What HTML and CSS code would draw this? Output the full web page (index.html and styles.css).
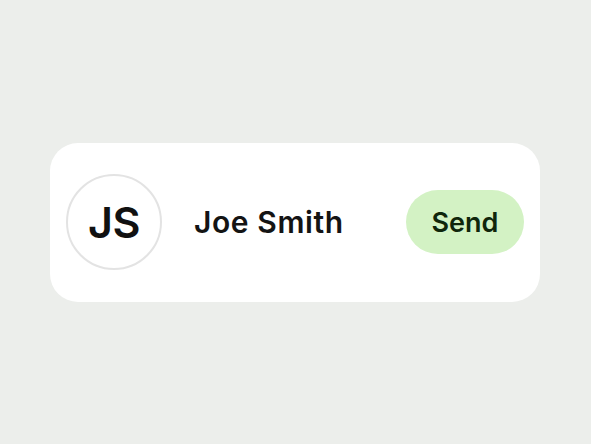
FILE: index.html
```html
<!DOCTYPE html>
<html>
<head>
<meta charset="utf-8">
<link rel="stylesheet" href="styles.css">
</head>
<body>
<div class="card">
  <div class="avatar">JS</div>
  <div class="name">Joe Smith</div>
  <button class="send">Send</button>
</div>
</body>
</html>
```
FILE: styles.css
```css
html, body {
  margin: 0;
  height: 100%;
}
body {
  background: #eceeeb;
  display: flex;
  align-items: center;
  padding-left: 50px;
  box-sizing: border-box;
  font-family: Inter, "Liberation Sans", sans-serif;
}
.card {
  box-sizing: border-box;
  width: 490px;
  height: 159px;
  background: #ffffff;
  border-radius: 28px;
  display: flex;
  align-items: center;
  padding: 0 16px;
}
.avatar {
  box-sizing: border-box;
  width: 96px;
  height: 96px;
  border-radius: 50%;
  border: 2px solid #e3e3e3;
  display: flex;
  align-items: center;
  justify-content: center;
  font-size: 43px;
  font-weight: 600;
  color: #111111;
  letter-spacing: -0.5px;
}
.name {
  margin-left: 32px;
  font-size: 30px;
  font-weight: 600;
  color: #141414;
  letter-spacing: 0.6px;
}
.send {
  margin-left: auto;
  width: 118px;
  height: 64px;
  border: none;
  border-radius: 32px;
  background: #d3f2c4;
  color: #0f260b;
  font-family: inherit;
  font-size: 27px;
  font-weight: 600;
  padding: 0;
}
```
